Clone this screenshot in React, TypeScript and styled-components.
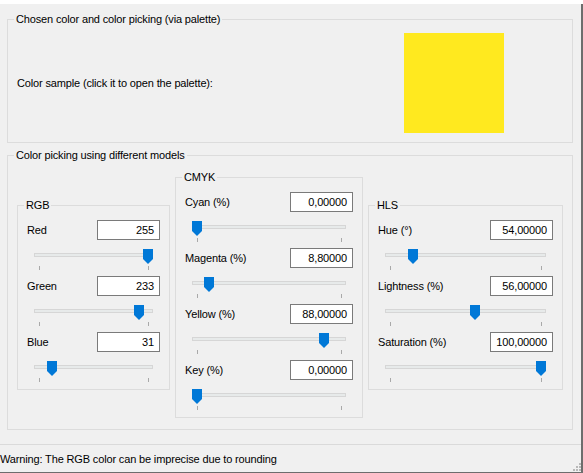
import React from 'react';
import styled, { createGlobalStyle } from 'styled-components';

const GlobalStyle = createGlobalStyle`
  html, body { margin: 0; padding: 0; background: #f0f0f0; }
  body {
    font-family: "Liberation Sans", Arial, sans-serif;
    font-size: 11px;
    letter-spacing: -0.15px;
    color: #000;
  }
  * { box-sizing: border-box; }
`;

const Window = styled.div`
  width: 583px;
  height: 473px;
  display: flex;
  flex-direction: column;
  background: #f0f0f0;
`;

const TopStrip = styled.div`
  height: 4px;
  background: #ffffff;
  flex: none;
`;

const Frame = styled.div`
  flex: 1;
  display: flex;
  flex-direction: column;
  border-right: 2px solid #6d6d6d;
  border-bottom: 1px solid #6d6d6d;
`;

const Body = styled.div`
  display: flex;
  flex-direction: column;
  gap: 12px;
  padding: 15px 8px 0 7px;
`;

const Group = styled.div`
  position: relative;
  border: 1px solid #dcdcdc;
`;

const Legend = styled.span`
  position: absolute;
  top: -8px;
  left: 6px;
  padding: 0 2px;
  line-height: 14px;
  background: #f0f0f0;
  white-space: nowrap;
`;

const SampleRow = styled.div`
  display: flex;
  align-items: center;
  padding: 13px 68px 9px 9px;
`;

const SampleLabel = styled.span`
  flex: 1;
`;

const Swatch = styled.div<{ $color: string }>`
  width: 100px;
  height: 100px;
  background: ${(p) => p.$color};
  cursor: pointer;
`;

const ModelsRow = styled.div`
  display: flex;
  align-items: center;
  gap: 5px;
  padding: 21px 8px 11px 9px;
`;

const ModelGroup = styled(Group)<{ $width: number }>`
  width: ${(p) => p.$width}px;
  flex: none;
  padding: 14px 9px 7px 9px;
  display: flex;
  flex-direction: column;
  gap: 6px;
`;

const Field = styled.div`
  display: flex;
  flex-direction: column;
  gap: 9px;
`;

const FieldHeader = styled.div`
  display: flex;
  align-items: center;
  justify-content: space-between;
  height: 20px;
`;

const ValueBox = styled.div`
  width: 63px;
  height: 20px;
  border: 1px solid #7a7a7a;
  background: #ffffff;
  text-align: right;
  padding-right: 5px;
  line-height: 18px;
`;

const SliderBox = styled.div`
  position: relative;
  height: 21px;
  margin: 0 7px;
`;

const Track = styled.div`
  position: absolute;
  top: 4px;
  left: 0;
  right: 0;
  height: 4px;
  background: #e7eaea;
  border: 1px solid #d6d6d6;
`;

const Ticks = styled.div`
  position: absolute;
  left: 0;
  right: 0;
  bottom: 0;
  height: 4px;
  display: flex;
  justify-content: space-between;
  padding: 0 4px 0 5px;
`;

const Tick = styled.span`
  width: 1px;
  height: 4px;
  background: #a9a9a9;
`;

const ThumbSvg = styled.svg`
  position: absolute;
  top: 0;
  display: block;
`;

const StatusBar = styled.div`
  margin-top: auto;
  height: 28px;
  border-top: 1px solid #dadada;
  display: flex;
  align-items: center;
  padding-left: 0;
`;

const StatusText = styled.span`
  flex: 1;
  white-space: nowrap;
`;

const Grip = styled.svg`
  align-self: flex-end;
  margin-bottom: 1px;
  display: block;
`;

type FieldDef = { label: string; value: string; frac: number };

const Slider: React.FC<{ frac: number; width: number }> = ({ frac, width }) => {
  const left = Math.round(frac * (width - 10));
  return (
    <SliderBox>
      <Track />
      <Ticks>
        <Tick />
        <Tick />
      </Ticks>
      <ThumbSvg width={10} height={15} viewBox="0 0 10 15" style={{ left }}>
        <path d="M0 0 H10 V10 L5 15 L0 10 Z" fill="#0078d7" />
      </ThumbSvg>
    </SliderBox>
  );
};

const Model: React.FC<{ title: string; width: number; fields: FieldDef[] }> = ({
  title,
  width,
  fields,
}) => {
  const trackWidth = width - 2 - 18 - 14;
  return (
    <ModelGroup $width={width}>
      <Legend>{title}</Legend>
      {fields.map((f) => (
        <Field key={f.label}>
          <FieldHeader>
            <span>{f.label}</span>
            <ValueBox>{f.value}</ValueBox>
          </FieldHeader>
          <Slider frac={f.frac} width={trackWidth} />
        </Field>
      ))}
    </ModelGroup>
  );
};

const rgb: FieldDef[] = [
  { label: 'Red', value: '255', frac: 255 / 255 },
  { label: 'Green', value: '233', frac: 233 / 255 },
  { label: 'Blue', value: '31', frac: 31 / 255 },
];

const cmyk: FieldDef[] = [
  { label: 'Cyan (%)', value: '0,00000', frac: 0 },
  { label: 'Magenta (%)', value: '8,80000', frac: 0.08 },
  { label: 'Yellow (%)', value: '88,00000', frac: 0.88 },
  { label: 'Key (%)', value: '0,00000', frac: 0 },
];

const hls: FieldDef[] = [
  { label: 'Hue (°)', value: '54,00000', frac: 54 / 360 },
  { label: 'Lightness (%)', value: '56,00000', frac: 0.56 },
  { label: 'Saturation (%)', value: '100,00000', frac: 1 },
];

export default function App() {
  return (
    <>
      <GlobalStyle />
      <Window>
        <TopStrip />
        <Frame>
          <Body>
            <Group>
              <Legend>Chosen color and color picking (via palette)</Legend>
              <SampleRow>
                <SampleLabel>Color sample (click it to open the palette):</SampleLabel>
                <Swatch $color="#ffe91f" />
              </SampleRow>
            </Group>
            <Group>
              <Legend>Color picking using different models</Legend>
              <ModelsRow>
                <Model title="RGB" width={153} fields={rgb} />
                <Model title="CMYK" width={188} fields={cmyk} />
                <Model title="HLS" width={195} fields={hls} />
              </ModelsRow>
            </Group>
          </Body>
          <StatusBar>
            <StatusText>Warning: The RGB color can be imprecise due to rounding</StatusText>
            <Grip width={8} height={8} viewBox="0 0 8 8">
              <rect x={6} y={0} width={2} height={2} fill="#b8b8b8" />
              <rect x={3} y={3} width={2} height={2} fill="#b8b8b8" />
              <rect x={6} y={3} width={2} height={2} fill="#b8b8b8" />
              <rect x={0} y={6} width={2} height={2} fill="#b8b8b8" />
              <rect x={3} y={6} width={2} height={2} fill="#b8b8b8" />
              <rect x={6} y={6} width={2} height={2} fill="#b8b8b8" />
            </Grip>
          </StatusBar>
        </Frame>
      </Window>
    </>
  );
}
